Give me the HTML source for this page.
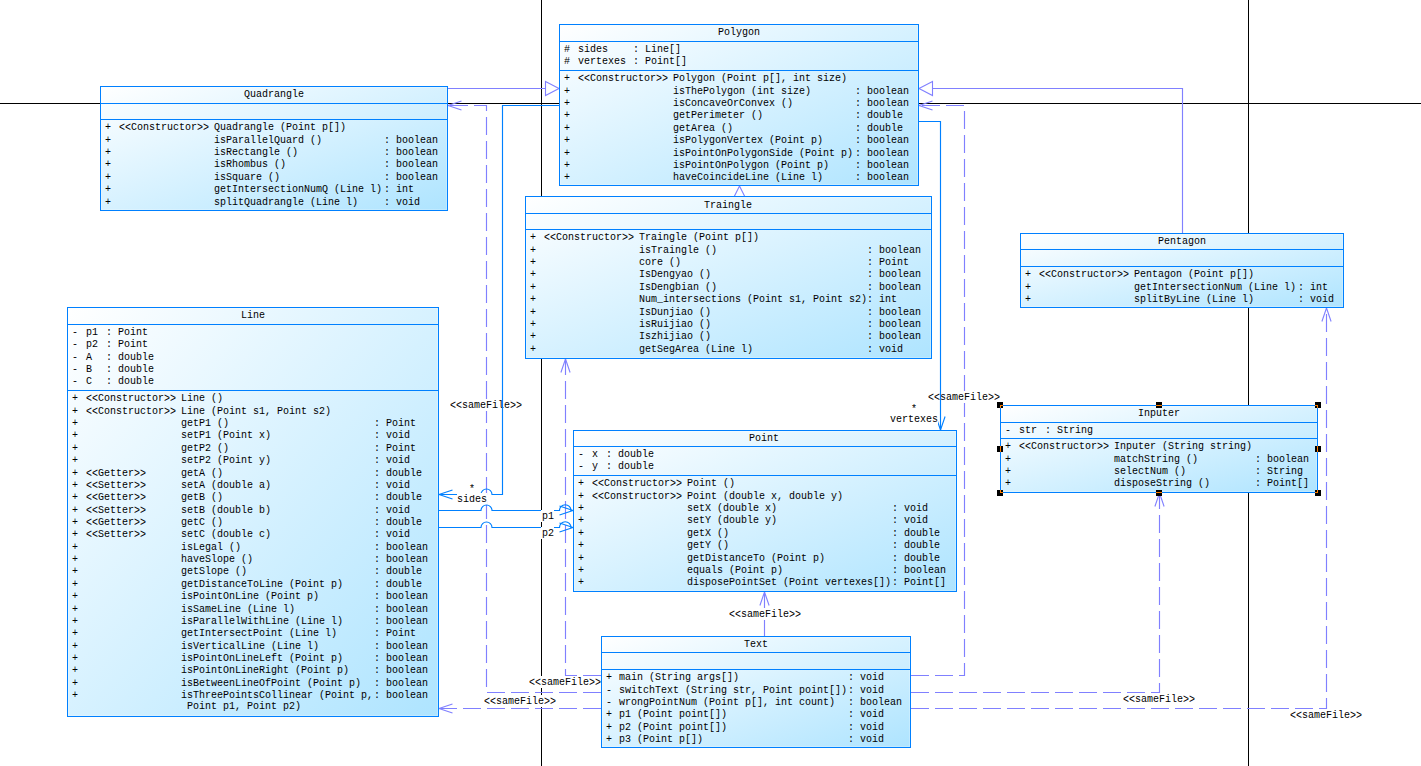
<!DOCTYPE html>
<html><head><meta charset="utf-8"><title>Class Diagram</title>
<style>
html,body{margin:0;padding:0;background:#fff;}
body{width:1421px;height:766px;overflow:hidden;position:relative;
 font-family:"Liberation Mono",monospace;font-size:10px;line-height:12px;color:#000;}
.t,.lb{position:absolute;white-space:pre;height:12px;}
b{font-weight:normal;display:inline-block;transform:scaleY(1.32);transform-origin:50% 37%;}
.lb{background:#fff;box-sizing:border-box;padding-top:1px;}
.box{position:absolute;box-sizing:border-box;border:1px solid #0080FF;
 background:linear-gradient(to bottom right,#fff 0%,#AEE4FF 100%);
 box-shadow:inset 0 0 0 1px rgba(255,255,255,.22);}
.box i{position:absolute;left:0;right:0;height:1px;background:#0080FF;}
.ln{position:absolute;left:0;top:0;overflow:visible;}
.pg{position:absolute;background:#000;}
.hd{position:absolute;width:6px;height:6px;background:#000;}
</style></head>
<body>
<div class="pg" style="left:541px;top:0;width:1px;height:766px"></div>
<div class="pg" style="left:1248px;top:0;width:1px;height:766px"></div>
<div class="pg" style="left:0;top:103px;width:1421px;height:1px"></div>
<svg class="ln" width="1421" height="766" viewBox="0 0 1421 766">
<path d="M601,692.5 L486.5,692.5 L486.5,105.5 L448,105.5" fill="none" stroke="#8080FF" stroke-width="1.15" stroke-dasharray="18 6"/>
<path d="M461.5,100.9 L448,105.5 L461.5,110.1" fill="none" stroke="#8080FF" stroke-width="1.1"/>
</svg>
<div class="lb" style="left:450px;top:399px;width:72px;padding-left:0px"><b>&lt;&lt;</b>sameFile<b>&gt;&gt;</b></div>
<svg class="ln" width="1421" height="766" viewBox="0 0 1421 766">
<path d="M911,675.5 L964.5,675.5 L964.5,105.5 L919,105.5" fill="none" stroke="#8080FF" stroke-width="1.15" stroke-dasharray="18 6"/>
<path d="M932.5,100.9 L919,105.5 L932.5,110.1" fill="none" stroke="#8080FF" stroke-width="1.1"/>
</svg>
<div class="lb" style="left:928px;top:391px;width:72px;padding-left:0px"><b>&lt;&lt;</b>sameFile<b>&gt;&gt;</b></div>
<svg class="ln" width="1421" height="766" viewBox="0 0 1421 766">
<path d="M601,675.5 L565.5,675.5 L565.5,359" fill="none" stroke="#8080FF" stroke-width="1.15" stroke-dasharray="18 6"/>
<path d="M570.1,372.5 L565.5,359 L560.9,372.5" fill="none" stroke="#8080FF" stroke-width="1.1"/>
</svg>
<div class="lb" style="left:529px;top:676px;width:72px;padding-left:0px"><b>&lt;&lt;</b>sameFile<b>&gt;&gt;</b></div>
<svg class="ln" width="1421" height="766" viewBox="0 0 1421 766">
<path d="M601,708.5 L439,708.5" fill="none" stroke="#8080FF" stroke-width="1.15" stroke-dasharray="18 6"/>
<path d="M452.5,703.9 L439,708.5 L452.5,713.1" fill="none" stroke="#8080FF" stroke-width="1.1"/>
</svg>
<div class="lb" style="left:484px;top:695px;width:72px;padding-left:0px"><b>&lt;&lt;</b>sameFile<b>&gt;&gt;</b></div>
<svg class="ln" width="1421" height="766" viewBox="0 0 1421 766">
<path d="M764.5,636 L764.5,592" fill="none" stroke="#8080FF" stroke-width="1.15" stroke-dasharray="18 6"/>
<path d="M769.1,605.5 L764.5,592 L759.9,605.5" fill="none" stroke="#8080FF" stroke-width="1.1"/>
</svg>
<div class="lb" style="left:729px;top:608px;width:72px;padding-left:0px"><b>&lt;&lt;</b>sameFile<b>&gt;&gt;</b></div>
<svg class="ln" width="1421" height="766" viewBox="0 0 1421 766">
<path d="M911,692.5 L1159.5,692.5 L1159.5,493" fill="none" stroke="#8080FF" stroke-width="1.15" stroke-dasharray="18 6"/>
<path d="M1164.1,506.5 L1159.5,493 L1154.9,506.5" fill="none" stroke="#8080FF" stroke-width="1.1"/>
</svg>
<div class="lb" style="left:1123px;top:693px;width:72px;padding-left:0px"><b>&lt;&lt;</b>sameFile<b>&gt;&gt;</b></div>
<svg class="ln" width="1421" height="766" viewBox="0 0 1421 766">
<path d="M911,708.5 L1326.5,708.5 L1326.5,308" fill="none" stroke="#8080FF" stroke-width="1.15" stroke-dasharray="18 6"/>
<path d="M1331.1,321.5 L1326.5,308 L1321.9,321.5" fill="none" stroke="#8080FF" stroke-width="1.1"/>
</svg>
<div class="lb" style="left:1290px;top:709px;width:72px;padding-left:0px"><b>&lt;&lt;</b>sameFile<b>&gt;&gt;</b></div>
<svg class="ln" width="1421" height="766" viewBox="0 0 1421 766">
<path d="M559,105.5 H502.5 V494.5 H492 A5.5,5.5 0 0 0 481,494.5 H439" fill="none" stroke="#0080FF" stroke-width="1.15"/>
<path d="M452.5,489.9 L439,494.5 L452.5,499.1" fill="none" stroke="#0080FF" stroke-width="1.1"/>
</svg>
<div class="lb" style="left:457px;top:493px;width:30px;padding-left:0px">sides</div>
<div class="lb" style="left:469px;top:483px;width:6px;padding-left:0px">*</div>
<svg class="ln" width="1421" height="766" viewBox="0 0 1421 766">
<path d="M919,121.5 H940.5 V430" fill="none" stroke="#0080FF" stroke-width="1.15"/>
<path d="M935.9,416.5 L940.5,430 L945.1,416.5" fill="none" stroke="#0080FF" stroke-width="1.1"/>
</svg>
<div class="lb" style="left:890px;top:413px;width:48px;padding-left:0px">vertexes</div>
<div class="lb" style="left:911px;top:403px;width:6px;padding-left:0px">*</div>
<svg class="ln" width="1421" height="766" viewBox="0 0 1421 766">
<path d="M439,510.5 H481 A5.5,5.5 0 0 1 492,510.5 H559.5 A5.7,5.7 0 0 1 571,510.5 H573" fill="none" stroke="#0080FF" stroke-width="1.15"/>
<path d="M559.5,515.1 L573,510.5 L559.5,505.9" fill="none" stroke="#0080FF" stroke-width="1.1"/>
</svg>
<div class="lb" style="left:541px;top:510px;width:13px;padding-left:1px">p1</div>
<svg class="ln" width="1421" height="766" viewBox="0 0 1421 766">
<path d="M439,527.5 H481 A5.5,5.5 0 0 1 492,527.5 H559.5 A5.7,5.7 0 0 1 571,527.5 H573" fill="none" stroke="#0080FF" stroke-width="1.15"/>
<path d="M559.5,532.1 L573,527.5 L559.5,522.9" fill="none" stroke="#0080FF" stroke-width="1.1"/>
</svg>
<div class="lb" style="left:541px;top:527px;width:13px;padding-left:1px">p2</div>
<svg class="ln" width="1421" height="766" viewBox="0 0 1421 766">
<path d="M448,88.5 H545.5" fill="none" stroke="#8080FF" stroke-width="1.15"/>
<path d="M545.5,81.5 L559,88.5 L545.5,95.5 Z" fill="#fff" stroke="#8080FF" stroke-width="1.1"/>
<path d="M1182.5,233 V88.5 H932.5" fill="none" stroke="#8080FF" stroke-width="1.15"/>
<path d="M932.5,81.5 L919,88.5 L932.5,95.5 Z" fill="#fff" stroke="#8080FF" stroke-width="1.1"/>
<path d="M739.5,186 L732.5,200 H746.5 Z" fill="#fff" stroke="#8080FF" stroke-width="1.1"/>
</svg>
<div class="box" style="left:100px;top:86px;width:348px;height:125px"><i style="top:16px"></i><i style="top:32px"></i></div>
<div class="t" style="left:244px;top:89px">Quadrangle</div>
<div class="t" style="left:105px;top:122px">+</div>
<div class="t" style="left:119px;top:122px"><b>&lt;&lt;</b>Constructor<b>&gt;&gt;</b></div>
<div class="t" style="left:214px;top:122px">Quadrangle (Point p[])</div>
<div class="t" style="left:105px;top:135px">+</div>
<div class="t" style="left:214px;top:135px">isParallelQuard ()</div>
<div class="t" style="left:384px;top:135px">: boolean</div>
<div class="t" style="left:105px;top:147px">+</div>
<div class="t" style="left:214px;top:147px">isRectangle ()</div>
<div class="t" style="left:384px;top:147px">: boolean</div>
<div class="t" style="left:105px;top:159px">+</div>
<div class="t" style="left:214px;top:159px">isRhombus ()</div>
<div class="t" style="left:384px;top:159px">: boolean</div>
<div class="t" style="left:105px;top:172px">+</div>
<div class="t" style="left:214px;top:172px">isSquare ()</div>
<div class="t" style="left:384px;top:172px">: boolean</div>
<div class="t" style="left:105px;top:184px">+</div>
<div class="t" style="left:214px;top:184px">getIntersectionNumQ (Line l)</div>
<div class="t" style="left:384px;top:184px">: int</div>
<div class="t" style="left:105px;top:197px">+</div>
<div class="t" style="left:214px;top:197px">splitQuadrangle (Line l)</div>
<div class="t" style="left:384px;top:197px">: void</div>
<div class="box" style="left:559px;top:24px;width:360px;height:162px"><i style="top:16px"></i><i style="top:45px"></i></div>
<div class="t" style="left:718px;top:27px">Polygon</div>
<div class="t" style="left:564px;top:44px">#</div>
<div class="t" style="left:578px;top:44px">sides</div>
<div class="t" style="left:633px;top:44px">: Line[]</div>
<div class="t" style="left:564px;top:56px">#</div>
<div class="t" style="left:578px;top:56px">vertexes</div>
<div class="t" style="left:633px;top:56px">: Point[]</div>
<div class="t" style="left:564px;top:73px">+</div>
<div class="t" style="left:578px;top:73px"><b>&lt;&lt;</b>Constructor<b>&gt;&gt;</b></div>
<div class="t" style="left:673px;top:73px">Polygon (Point p[], int size)</div>
<div class="t" style="left:564px;top:86px">+</div>
<div class="t" style="left:673px;top:86px">isThePolygon (int size)</div>
<div class="t" style="left:855px;top:86px">: boolean</div>
<div class="t" style="left:564px;top:98px">+</div>
<div class="t" style="left:673px;top:98px">isConcaveOrConvex ()</div>
<div class="t" style="left:855px;top:98px">: boolean</div>
<div class="t" style="left:564px;top:110px">+</div>
<div class="t" style="left:673px;top:110px">getPerimeter ()</div>
<div class="t" style="left:855px;top:110px">: double</div>
<div class="t" style="left:564px;top:123px">+</div>
<div class="t" style="left:673px;top:123px">getArea ()</div>
<div class="t" style="left:855px;top:123px">: double</div>
<div class="t" style="left:564px;top:135px">+</div>
<div class="t" style="left:673px;top:135px">isPolygonVertex (Point p)</div>
<div class="t" style="left:855px;top:135px">: boolean</div>
<div class="t" style="left:564px;top:148px">+</div>
<div class="t" style="left:673px;top:148px">isPointOnPolygonSide (Point p)</div>
<div class="t" style="left:855px;top:148px">: boolean</div>
<div class="t" style="left:564px;top:160px">+</div>
<div class="t" style="left:673px;top:160px">isPointOnPolygon (Point p)</div>
<div class="t" style="left:855px;top:160px">: boolean</div>
<div class="t" style="left:564px;top:172px">+</div>
<div class="t" style="left:673px;top:172px">haveCoincideLine (Line l)</div>
<div class="t" style="left:855px;top:172px">: boolean</div>
<div class="box" style="left:525px;top:196px;width:407px;height:163px"><i style="top:16px"></i><i style="top:32px"></i></div>
<div class="t" style="left:704px;top:200px">Traingle</div>
<div class="t" style="left:530px;top:232px">+</div>
<div class="t" style="left:544px;top:232px"><b>&lt;&lt;</b>Constructor<b>&gt;&gt;</b></div>
<div class="t" style="left:639px;top:232px">Traingle (Point p[])</div>
<div class="t" style="left:530px;top:245px">+</div>
<div class="t" style="left:639px;top:245px">isTraingle ()</div>
<div class="t" style="left:867px;top:245px">: boolean</div>
<div class="t" style="left:530px;top:257px">+</div>
<div class="t" style="left:639px;top:257px">core ()</div>
<div class="t" style="left:867px;top:257px">: Point</div>
<div class="t" style="left:530px;top:269px">+</div>
<div class="t" style="left:639px;top:269px">IsDengyao ()</div>
<div class="t" style="left:867px;top:269px">: boolean</div>
<div class="t" style="left:530px;top:282px">+</div>
<div class="t" style="left:639px;top:282px">IsDengbian ()</div>
<div class="t" style="left:867px;top:282px">: boolean</div>
<div class="t" style="left:530px;top:294px">+</div>
<div class="t" style="left:639px;top:294px">Num_intersections (Point s1, Point s2)</div>
<div class="t" style="left:867px;top:294px">: int</div>
<div class="t" style="left:530px;top:307px">+</div>
<div class="t" style="left:639px;top:307px">IsDunjiao ()</div>
<div class="t" style="left:867px;top:307px">: boolean</div>
<div class="t" style="left:530px;top:319px">+</div>
<div class="t" style="left:639px;top:319px">isRuijiao ()</div>
<div class="t" style="left:867px;top:319px">: boolean</div>
<div class="t" style="left:530px;top:331px">+</div>
<div class="t" style="left:639px;top:331px">Iszhijiao ()</div>
<div class="t" style="left:867px;top:331px">: boolean</div>
<div class="t" style="left:530px;top:344px">+</div>
<div class="t" style="left:639px;top:344px">getSegArea (Line l)</div>
<div class="t" style="left:867px;top:344px">: void</div>
<div class="box" style="left:1020px;top:233px;width:324px;height:75px"><i style="top:15px"></i><i style="top:32px"></i></div>
<div class="t" style="left:1158px;top:236px">Pentagon</div>
<div class="t" style="left:1025px;top:269px">+</div>
<div class="t" style="left:1039px;top:269px"><b>&lt;&lt;</b>Constructor<b>&gt;&gt;</b></div>
<div class="t" style="left:1134px;top:269px">Pentagon (Point p[])</div>
<div class="t" style="left:1025px;top:282px">+</div>
<div class="t" style="left:1134px;top:282px">getIntersectionNum (Line l)</div>
<div class="t" style="left:1298px;top:282px">: int</div>
<div class="t" style="left:1025px;top:294px">+</div>
<div class="t" style="left:1134px;top:294px">splitByLine (Line l)</div>
<div class="t" style="left:1298px;top:294px">: void</div>
<div class="box" style="left:67px;top:307px;width:372px;height:410px"><i style="top:16px"></i><i style="top:82px"></i></div>
<div class="t" style="left:241px;top:310px">Line</div>
<div class="t" style="left:72px;top:327px">-</div>
<div class="t" style="left:86px;top:327px">p1</div>
<div class="t" style="left:106px;top:327px">: Point</div>
<div class="t" style="left:72px;top:339px">-</div>
<div class="t" style="left:86px;top:339px">p2</div>
<div class="t" style="left:106px;top:339px">: Point</div>
<div class="t" style="left:72px;top:352px">-</div>
<div class="t" style="left:86px;top:352px">A</div>
<div class="t" style="left:106px;top:352px">: double</div>
<div class="t" style="left:72px;top:364px">-</div>
<div class="t" style="left:86px;top:364px">B</div>
<div class="t" style="left:106px;top:364px">: double</div>
<div class="t" style="left:72px;top:376px">-</div>
<div class="t" style="left:86px;top:376px">C</div>
<div class="t" style="left:106px;top:376px">: double</div>
<div class="t" style="left:72px;top:393px">+</div>
<div class="t" style="left:86px;top:393px"><b>&lt;&lt;</b>Constructor<b>&gt;&gt;</b></div>
<div class="t" style="left:181px;top:393px">Line ()</div>
<div class="t" style="left:72px;top:406px">+</div>
<div class="t" style="left:86px;top:406px"><b>&lt;&lt;</b>Constructor<b>&gt;&gt;</b></div>
<div class="t" style="left:181px;top:406px">Line (Point s1, Point s2)</div>
<div class="t" style="left:72px;top:418px">+</div>
<div class="t" style="left:181px;top:418px">getP1 ()</div>
<div class="t" style="left:374px;top:418px">: Point</div>
<div class="t" style="left:72px;top:430px">+</div>
<div class="t" style="left:181px;top:430px">setP1 (Point x)</div>
<div class="t" style="left:374px;top:430px">: void</div>
<div class="t" style="left:72px;top:443px">+</div>
<div class="t" style="left:181px;top:443px">getP2 ()</div>
<div class="t" style="left:374px;top:443px">: Point</div>
<div class="t" style="left:72px;top:455px">+</div>
<div class="t" style="left:181px;top:455px">setP2 (Point y)</div>
<div class="t" style="left:374px;top:455px">: void</div>
<div class="t" style="left:72px;top:468px">+</div>
<div class="t" style="left:86px;top:468px"><b>&lt;&lt;</b>Getter<b>&gt;&gt;</b></div>
<div class="t" style="left:181px;top:468px">getA ()</div>
<div class="t" style="left:374px;top:468px">: double</div>
<div class="t" style="left:72px;top:480px">+</div>
<div class="t" style="left:86px;top:480px"><b>&lt;&lt;</b>Setter<b>&gt;&gt;</b></div>
<div class="t" style="left:181px;top:480px">setA (double a)</div>
<div class="t" style="left:374px;top:480px">: void</div>
<div class="t" style="left:72px;top:492px">+</div>
<div class="t" style="left:86px;top:492px"><b>&lt;&lt;</b>Getter<b>&gt;&gt;</b></div>
<div class="t" style="left:181px;top:492px">getB ()</div>
<div class="t" style="left:374px;top:492px">: double</div>
<div class="t" style="left:72px;top:505px">+</div>
<div class="t" style="left:86px;top:505px"><b>&lt;&lt;</b>Setter<b>&gt;&gt;</b></div>
<div class="t" style="left:181px;top:505px">setB (double b)</div>
<div class="t" style="left:374px;top:505px">: void</div>
<div class="t" style="left:72px;top:517px">+</div>
<div class="t" style="left:86px;top:517px"><b>&lt;&lt;</b>Getter<b>&gt;&gt;</b></div>
<div class="t" style="left:181px;top:517px">getC ()</div>
<div class="t" style="left:374px;top:517px">: double</div>
<div class="t" style="left:72px;top:529px">+</div>
<div class="t" style="left:86px;top:529px"><b>&lt;&lt;</b>Setter<b>&gt;&gt;</b></div>
<div class="t" style="left:181px;top:529px">setC (double c)</div>
<div class="t" style="left:374px;top:529px">: void</div>
<div class="t" style="left:72px;top:542px">+</div>
<div class="t" style="left:181px;top:542px">isLegal ()</div>
<div class="t" style="left:374px;top:542px">: boolean</div>
<div class="t" style="left:72px;top:554px">+</div>
<div class="t" style="left:181px;top:554px">haveSlope ()</div>
<div class="t" style="left:374px;top:554px">: boolean</div>
<div class="t" style="left:72px;top:566px">+</div>
<div class="t" style="left:181px;top:566px">getSlope ()</div>
<div class="t" style="left:374px;top:566px">: double</div>
<div class="t" style="left:72px;top:579px">+</div>
<div class="t" style="left:181px;top:579px">getDistanceToLine (Point p)</div>
<div class="t" style="left:374px;top:579px">: double</div>
<div class="t" style="left:72px;top:591px">+</div>
<div class="t" style="left:181px;top:591px">isPointOnLine (Point p)</div>
<div class="t" style="left:374px;top:591px">: boolean</div>
<div class="t" style="left:72px;top:604px">+</div>
<div class="t" style="left:181px;top:604px">isSameLine (Line l)</div>
<div class="t" style="left:374px;top:604px">: boolean</div>
<div class="t" style="left:72px;top:616px">+</div>
<div class="t" style="left:181px;top:616px">isParallelWithLine (Line l)</div>
<div class="t" style="left:374px;top:616px">: boolean</div>
<div class="t" style="left:72px;top:628px">+</div>
<div class="t" style="left:181px;top:628px">getIntersectPoint (Line l)</div>
<div class="t" style="left:374px;top:628px">: Point</div>
<div class="t" style="left:72px;top:641px">+</div>
<div class="t" style="left:181px;top:641px">isVerticalLine (Line l)</div>
<div class="t" style="left:374px;top:641px">: boolean</div>
<div class="t" style="left:72px;top:653px">+</div>
<div class="t" style="left:181px;top:653px">isPointOnLineLeft (Point p)</div>
<div class="t" style="left:374px;top:653px">: boolean</div>
<div class="t" style="left:72px;top:665px">+</div>
<div class="t" style="left:181px;top:665px">isPointOnLineRight (Point p)</div>
<div class="t" style="left:374px;top:665px">: boolean</div>
<div class="t" style="left:72px;top:678px">+</div>
<div class="t" style="left:181px;top:678px">isBetweenLineOfPoint (Point p)</div>
<div class="t" style="left:374px;top:678px">: boolean</div>
<div class="t" style="left:72px;top:690px">+</div>
<div class="t" style="left:181px;top:690px">isThreePointsCollinear (Point p,</div>
<div class="t" style="left:374px;top:690px">: boolean</div>
<div class="t" style="left:181px;top:701px"> Point p1, Point p2)</div>
<div class="box" style="left:573px;top:430px;width:384px;height:162px"><i style="top:15px"></i><i style="top:44px"></i></div>
<div class="t" style="left:749px;top:433px">Point</div>
<div class="t" style="left:578px;top:449px">-</div>
<div class="t" style="left:592px;top:449px">x</div>
<div class="t" style="left:606px;top:449px">: double</div>
<div class="t" style="left:578px;top:461px">-</div>
<div class="t" style="left:592px;top:461px">y</div>
<div class="t" style="left:606px;top:461px">: double</div>
<div class="t" style="left:578px;top:478px">+</div>
<div class="t" style="left:592px;top:478px"><b>&lt;&lt;</b>Constructor<b>&gt;&gt;</b></div>
<div class="t" style="left:687px;top:478px">Point ()</div>
<div class="t" style="left:578px;top:491px">+</div>
<div class="t" style="left:592px;top:491px"><b>&lt;&lt;</b>Constructor<b>&gt;&gt;</b></div>
<div class="t" style="left:687px;top:491px">Point (double x, double y)</div>
<div class="t" style="left:578px;top:503px">+</div>
<div class="t" style="left:687px;top:503px">setX (double x)</div>
<div class="t" style="left:892px;top:503px">: void</div>
<div class="t" style="left:578px;top:515px">+</div>
<div class="t" style="left:687px;top:515px">setY (double y)</div>
<div class="t" style="left:892px;top:515px">: void</div>
<div class="t" style="left:578px;top:528px">+</div>
<div class="t" style="left:687px;top:528px">getX ()</div>
<div class="t" style="left:892px;top:528px">: double</div>
<div class="t" style="left:578px;top:540px">+</div>
<div class="t" style="left:687px;top:540px">getY ()</div>
<div class="t" style="left:892px;top:540px">: double</div>
<div class="t" style="left:578px;top:553px">+</div>
<div class="t" style="left:687px;top:553px">getDistanceTo (Point p)</div>
<div class="t" style="left:892px;top:553px">: double</div>
<div class="t" style="left:578px;top:565px">+</div>
<div class="t" style="left:687px;top:565px">equals (Point p)</div>
<div class="t" style="left:892px;top:565px">: boolean</div>
<div class="t" style="left:578px;top:577px">+</div>
<div class="t" style="left:687px;top:577px">disposePointSet (Point vertexes[])</div>
<div class="t" style="left:892px;top:577px">: Point[]</div>
<div class="box" style="left:601px;top:636px;width:310px;height:112px"><i style="top:15px"></i><i style="top:32px"></i></div>
<div class="t" style="left:744px;top:639px">Text</div>
<div class="t" style="left:606px;top:672px">+</div>
<div class="t" style="left:619px;top:672px">main (String args[])</div>
<div class="t" style="left:848px;top:672px">: void</div>
<div class="t" style="left:606px;top:685px">-</div>
<div class="t" style="left:619px;top:685px">switchText (String str, Point point[])</div>
<div class="t" style="left:848px;top:685px">: void</div>
<div class="t" style="left:606px;top:697px">-</div>
<div class="t" style="left:619px;top:697px">wrongPointNum (Point p[], int count)</div>
<div class="t" style="left:848px;top:697px">: boolean</div>
<div class="t" style="left:606px;top:709px">+</div>
<div class="t" style="left:619px;top:709px">p1 (Point point[])</div>
<div class="t" style="left:848px;top:709px">: void</div>
<div class="t" style="left:606px;top:722px">+</div>
<div class="t" style="left:619px;top:722px">p2 (Point point[])</div>
<div class="t" style="left:848px;top:722px">: void</div>
<div class="t" style="left:606px;top:734px">+</div>
<div class="t" style="left:619px;top:734px">p3 (Point p[])</div>
<div class="t" style="left:848px;top:734px">: void</div>
<div class="box" style="left:1000px;top:405px;width:318px;height:88px"><i style="top:16px"></i><i style="top:32px"></i></div>
<div class="t" style="left:1138px;top:408px">Inputer</div>
<div class="t" style="left:1005px;top:425px">-</div>
<div class="t" style="left:1019px;top:425px">str</div>
<div class="t" style="left:1045px;top:425px">: String</div>
<div class="t" style="left:1005px;top:441px">+</div>
<div class="t" style="left:1019px;top:441px"><b>&lt;&lt;</b>Constructor<b>&gt;&gt;</b></div>
<div class="t" style="left:1114px;top:441px">Inputer (String string)</div>
<div class="t" style="left:1005px;top:454px">+</div>
<div class="t" style="left:1114px;top:454px">matchString ()</div>
<div class="t" style="left:1255px;top:454px">: boolean</div>
<div class="t" style="left:1005px;top:466px">+</div>
<div class="t" style="left:1114px;top:466px">selectNum ()</div>
<div class="t" style="left:1255px;top:466px">: String</div>
<div class="t" style="left:1005px;top:478px">+</div>
<div class="t" style="left:1114px;top:478px">disposeString ()</div>
<div class="t" style="left:1255px;top:478px">: Point[]</div>
<div class="hd" style="left:997px;top:402px"></div>
<div class="hd" style="left:997px;top:446px"></div>
<div class="hd" style="left:997px;top:490px"></div>
<div class="hd" style="left:1156px;top:402px"></div>
<div class="hd" style="left:1156px;top:490px"></div>
<div class="hd" style="left:1315px;top:402px"></div>
<div class="hd" style="left:1315px;top:446px"></div>
<div class="hd" style="left:1315px;top:490px"></div>
<div style="position:absolute;left:1000px;top:405px;width:3px;height:1px;background:#FF7F00"></div>
<div style="position:absolute;left:1000px;top:405px;width:1px;height:3px;background:#FF7F00"></div>
<div style="position:absolute;left:1156px;top:405px;width:6px;height:1px;background:#FF7F00"></div>
<div style="position:absolute;left:1315px;top:405px;width:3px;height:1px;background:#FF7F00"></div>
<div style="position:absolute;left:1317px;top:405px;width:1px;height:3px;background:#FF7F00"></div>
<div style="position:absolute;left:1000px;top:446px;width:1px;height:6px;background:#FF7F00"></div>
<div style="position:absolute;left:1317px;top:446px;width:1px;height:6px;background:#FF7F00"></div>
<div style="position:absolute;left:1000px;top:492px;width:3px;height:1px;background:#FF7F00"></div>
<div style="position:absolute;left:1000px;top:490px;width:1px;height:3px;background:#FF7F00"></div>
<div style="position:absolute;left:1156px;top:492px;width:6px;height:1px;background:#FF7F00"></div>
<div style="position:absolute;left:1315px;top:492px;width:3px;height:1px;background:#FF7F00"></div>
<div style="position:absolute;left:1317px;top:490px;width:1px;height:3px;background:#FF7F00"></div>
</body></html>
